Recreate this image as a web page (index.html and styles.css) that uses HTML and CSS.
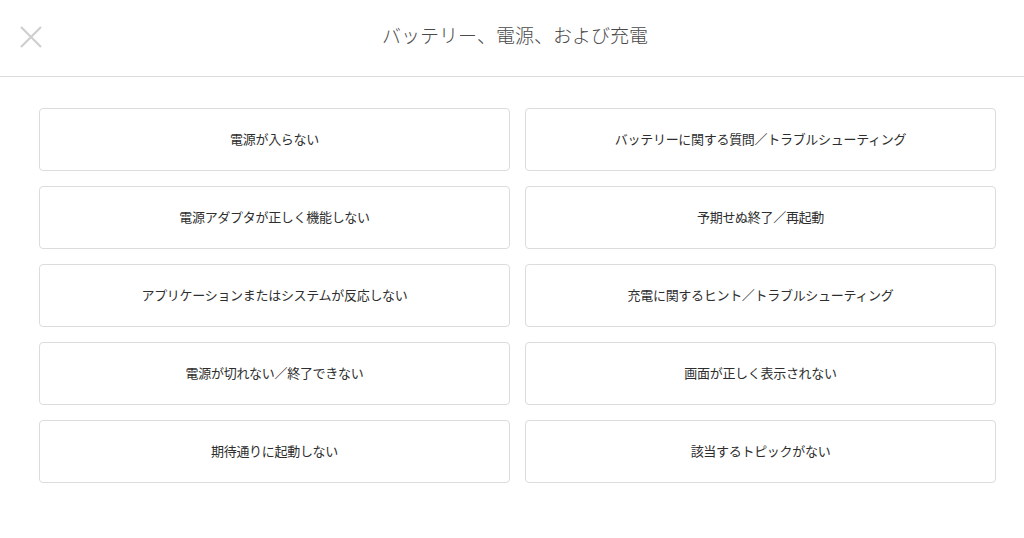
FILE: index.html
```html
<!DOCTYPE html>
<html lang="ja">
<head>
  <meta charset="utf-8">
  <title>バッテリー、電源、および充電</title>
  <link rel="stylesheet" href="styles.css">
</head>
<body>
  <header class="topbar">
    <button class="close" aria-label="閉じる">
      <svg width="22" height="22" viewBox="0 0 22 22">
        <path d="M1 1 L21 21 M21 1 L1 21" stroke="#cfcfcf" stroke-width="2.2" fill="none"/>
      </svg>
    </button>
    <h1>バッテリー、電源、および充電</h1>
  </header>
  <div class="topics">
    <a class="topic" href="#">電源が入らない</a>
    <a class="topic" href="#">バッテリーに関する質問／トラブルシューティング</a>
    <a class="topic" href="#">電源アダプタが正しく機能しない</a>
    <a class="topic" href="#">予期せぬ終了／再起動</a>
    <a class="topic" href="#">アプリケーションまたはシステムが反応しない</a>
    <a class="topic" href="#">充電に関するヒント／トラブルシューティング</a>
    <a class="topic" href="#">電源が切れない／終了できない</a>
    <a class="topic" href="#">画面が正しく表示されない</a>
    <a class="topic" href="#">期待通りに起動しない</a>
    <a class="topic" href="#">該当するトピックがない</a>
  </div>
</body>
</html>
```

FILE: styles.css
```css
* {
  box-sizing: border-box;
  font-family: "Noto Sans CJK JP", "Noto Sans", sans-serif;
}
body {
  margin: 0;
  background-color: white;
  color: #333;
}
.topbar {
  position: relative;
  height: 77px;
  border-bottom: 1px solid #dcdcdc;
  display: flex;
  align-items: center;
  justify-content: center;
}
.topbar h1 {
  margin: 0 0 7px 6px;
  font-size: 19px;
  font-weight: 300;
  color: #4a4a4a;
}
.close {
  position: absolute;
  left: 20px;
  top: 26px;
  padding: 0;
  border: none;
  background: none;
  cursor: pointer;
  line-height: 0;
}
.topics {
  display: grid;
  grid-template-columns: 471px 471px;
  gap: 15px;
  margin: 31px 0 0 39px;
}
.topic {
  height: 63px;
  padding-bottom: 3px;
  display: flex;
  align-items: center;
  justify-content: center;
  border: 1px solid #dcdcdc;
  border-radius: 4px;
  color: #2e2e2e;
  font-size: 13px;
  text-decoration: none;
  letter-spacing: -0.3px;
}
.topic:hover {
  border-color: #aaa;
}
```
